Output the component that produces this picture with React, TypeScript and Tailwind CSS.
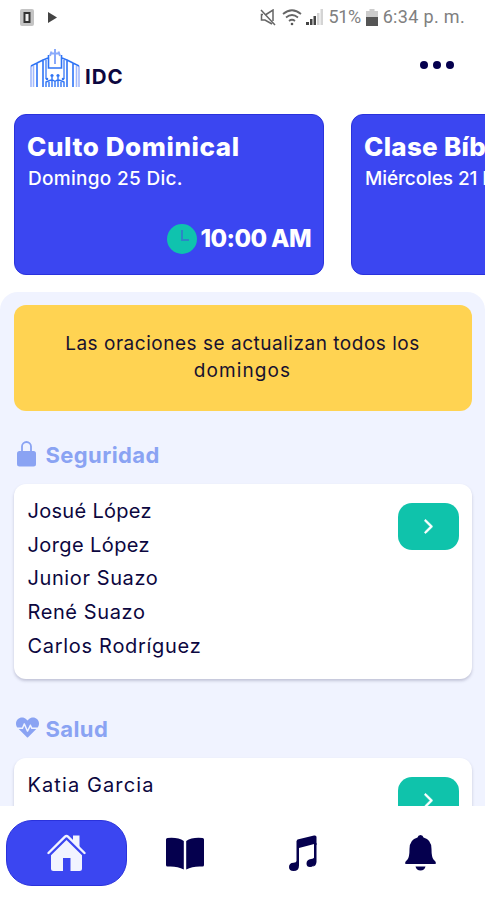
import { IoIosArrowForward } from "react-icons/io";
import { FaHeartbeat } from "react-icons/fa";
import type { ReactNode } from "react";

function StatusBar() {
  return (
    <div className="flex h-[34px] items-center justify-between pl-5 pr-5 font-['Roboto',sans-serif] text-lg text-[#808080]">
      <div className="flex items-center gap-[14px]">
        <svg width="14" height="17" viewBox="0 0 14 17">
          <rect width="14" height="17" rx="2" fill="#c4c4c4" />
          <rect x="4.5" y="4" width="5" height="9" fill="#eee" stroke="#333" strokeWidth="2" />
        </svg>
        <svg width="9" height="11" viewBox="0 0 9 11">
          <path d="M0 0 9 5.5 0 11Z" fill="#444" />
        </svg>
      </div>
      <div className="flex items-center">
        <svg width="16" height="17" viewBox="0 0 16 17" fill="none" stroke="#666" strokeWidth="1.5">
          <path d="M1 1 15 16M6 5.500 13 1V12M3 5.500H1.500V11H5L12 15" />
        </svg>
        <svg className="ml-[6px]" width="20" height="17" viewBox="0 0 20 17" fill="none" stroke="#666" strokeWidth="1.700">
          <path d="M1 5Q10-2.500 19 5M4 8.500Q10 3.500 16 8.500M7 12Q10 9.500 13 12" />
          <circle cx="10" cy="15" r="1.300" fill="#555" stroke="none" />
        </svg>
        <svg className="ml-1" width="17" height="16" viewBox="0 0 17 16">
          <path d="M0 13h3v3H0ZM4 10h2.500v6H4ZM7.500 7H10v9H7.500Z" fill="#444" />
          <path d="M11 4h2.500v12H11ZM14.500 0H17v16h-2.500Z" fill="#d4d4d4" />
        </svg>
        <span className="ml-[5px] tracking-[-0.4px]">51%</span>
        <svg className="ml-[5px]" width="12" height="17" viewBox="0 0 12 17">
          <path d="M3.500 0h5v2H12v6H0V2h3.500Z" fill="#ccc" />
          <path d="M0 8h12v9H0Z" fill="#555" />
        </svg>
        <span className="ml-[5px] tracking-[0.33px]">6:34 p. m.</span>
      </div>
    </div>
  );
}

function Logo() {
  return (
    <svg width="50" height="40" viewBox="0 0 50 40" fill="none" strokeWidth="1.600">
      <path d="M1 38V17M49 38V17M3.500 38V17M46.500 38V17" stroke="#a3b9fc" />
      <path d="M1 17 7 14V38M13 38V11L18 9M13 11 7 14M49 17 43 14V38M37 38V11L32 9M37 11 43 14" stroke="#2f74f5" />
      <path d="M16 30V11M34 30V11" stroke="#5f92f8" />
      <path d="M18.500 6V19H31.500V6" stroke="#2f74f5" />
      <path d="M25 0V15M20.500 4.500H29.500M21.500 2.500 20 7M28.500 2.500 30 7" stroke="#8aaafa" strokeWidth="2" />
      <path d="M16 38V33L22 30.500 25 32.500 28 30.500 34 33V38M19 38V33M31 38V33M22 28V38M28 28V38M25 33V38" stroke="#2f74f5" strokeWidth="1.400" />
      <g fill="#2f74f5">
        <circle cx="22" cy="26.500" r="1.600" />
        <circle cx="28" cy="26.500" r="1.600" />
        <circle cx="17" cy="30" r="1.300" />
        <circle cx="33" cy="30" r="1.300" />
      </g>
    </svg>
  );
}

function Header() {
  return (
    <header className="flex h-20 items-start justify-between pl-[30px] pr-[31px]">
      <div className="flex pt-[15px]">
        <Logo />
        <span className="ml-[5px] mt-[14px] text-[20.5px] leading-7 font-bold tracking-[1px]">IDC</span>
      </div>
      <div className="flex gap-[5px] pt-[27px]">
        <i className="size-2 rounded-full bg-[#05004e]" />
        <i className="size-2 rounded-full bg-[#05004e]" />
        <i className="size-2 rounded-full bg-[#05004e]" />
      </div>
    </header>
  );
}

function EventCard({ title, date, time }: { title: ReactNode; date: ReactNode; time?: string }) {
  return (
    <article className="flex h-[161px] w-[310px] shrink-0 flex-col rounded-xl border border-[#2a32dc] bg-[#3b46f1] px-3 pt-4 whitespace-nowrap text-white">
      <h2 className="text-[26px] leading-8 font-extrabold">{title}</h2>
      <p className="pl-px text-[19px] leading-8 font-medium">{date}</p>
      {time && (
        <div className="mt-[28px] flex items-center justify-end gap-1">
          <svg width="30" height="30" viewBox="0 0 30 30">
            <circle cx="15" cy="15" r="15" fill="#0fc3ae" />
            <path d="M15 6V16H22" fill="none" stroke="#2b86c5" strokeWidth="2" />
          </svg>
          <span className="text-[24px] leading-8 font-extrabold tracking-[-0.6px]">{time}</span>
        </div>
      )}
    </article>
  );
}

function GoButton() {
  return (
    <button className="flex h-[47px] w-[61px] items-center justify-center rounded-[14px] bg-[#0fc3ab] text-white">
      <IoIosArrowForward size={21} strokeWidth={14} stroke="currentColor" />
    </button>
  );
}

function LockIcon() {
  return (
    <svg width="19" height="27" viewBox="0 0 19 27">
      <path d="M5 12V6.500a4.500 4.500 0 0 1 9 0V12" fill="none" stroke="currentColor" strokeWidth="1.800" />
      <rect y="11" width="19" height="15.500" rx="2.500" fill="currentColor" />
    </svg>
  );
}

function Section({ icon, title, className, children }: { icon: ReactNode; title: string; className: string; children: ReactNode }) {
  return (
    <section className={className}>
      <h3 className="flex h-8 items-center text-[22px] font-bold tracking-[0.4px] text-[#8aa3f3]">
        <span className="flex w-8 items-center">{icon}</span>
        {title}
      </h3>
      <div className="mt-[13px] flex h-[195px] justify-between rounded-xl bg-white pt-[11px] pr-[13px] pl-[14px] shadow-[0_2px_3px_rgba(60,60,100,0.25)]">
        <ul className="text-[20px] leading-[33.7px]">{children}</ul>
        <div className="pt-2">
          <GoButton />
        </div>
      </div>
    </section>
  );
}

function HomeIcon() {
  return (
    <svg width="39" height="38" viewBox="0 0 39 38" fill="currentColor">
      <path d="M26 7V1.500H32.500V13.500Z" />
      <path d="M1.500 19 18 2.700Q19.500 1.400 21 2.700L37.500 19" fill="none" stroke="currentColor" strokeWidth="2.400" strokeLinecap="round" />
      <path d="M19.500 6 35 21.300V34.500Q35 37 32.500 37H23.500V24H16V37H6.500Q4 37 4 34.500V21.300Z" />
    </svg>
  );
}

function BookIcon() {
  return (
    <svg width="38" height="33" viewBox="0 0 38 33" fill="currentColor">
      <path d="M1.500 1Q12 0 17.800 4V32.500Q11 28.800 1.500 29.500 0 29.500 0 28V2.500Q0 1 1.500 1Z" />
      <path d="M36.500 1Q26 0 20.200 4V32.500Q27 28.800 36.500 29.500 38 29.500 38 28V2.500Q38 1 36.500 1Z" />
    </svg>
  );
}

function MusicIcon() {
  return (
    <svg width="28" height="36" viewBox="0 0 28 36" fill="currentColor">
      <path d="M8.500 4.500 25 .5Q27.500 0 27.500 2V10L25.500 10.500V26.500Q25.500 32 21 32 17.500 32 17.500 28.500 17.500 24.500 22 24 25.200 23.700 25.200 22V9L10 13V30.500Q10 36 4.500 36 0 36 0 32 0 28 4.500 27.800 7.500 27.500 7.500 26V6Z" />
      <path d="M25 8H27.500V27Q27 31 24 31.500L25 27Z" />
    </svg>
  );
}

function BellIcon() {
  return (
    <svg width="31" height="36" viewBox="0 0 31 36" fill="currentColor">
      <path d="M15.500 0Q18 0 18.500 2.500 26.500 4.500 26.500 14 26.500 22 28.500 24.500 31 26.500 31 28.200 31 29 29.500 29H1.500Q0 29 0 28.200 0 26.500 2.500 24.500 4.500 22 4.500 14 4.500 4.500 12.500 2.500 13 0 15.500 0Z" />
      <path d="M10.500 31.500H20.500Q19.500 35.500 15.500 35.500T10.500 31.500Z" />
    </svg>
  );
}

function TabBar() {
  return (
    <nav className="flex h-[94px] shrink-0 items-start bg-white pl-[6px] pt-[14px] text-[#05004e]">
      <div className="flex h-[66px] w-[121px] items-center justify-center rounded-[26px] border border-[#2a32dc] bg-[#3b46f1] text-[#f2f4ff]">
        <HomeIcon />
      </div>
      <div className="flex h-[66px] w-[115px] items-center justify-center">
        <BookIcon />
      </div>
      <div className="flex h-[66px] w-[121px] items-center justify-center">
        <MusicIcon />
      </div>
      <div className="flex h-[66px] w-[114px] items-center justify-center">
        <BellIcon />
      </div>
    </nav>
  );
}

export default function App() {
  return (
    <div className="flex h-[900px] w-[485px] flex-col overflow-hidden bg-white font-['Inter',sans-serif] text-[#0c0740]">
      <StatusBar />
      <Header />
      <div className="flex shrink-0 gap-[27px] overflow-hidden pl-[14px]">
        <EventCard
          title={<span className="tracking-[0.6px]">Culto Dominical</span>}
          date={<span className="tracking-[0.3px]">Domingo 25 Dic.</span>}
          time="10:00 AM"
        />
        <EventCard
          title={<span className="tracking-[0.3px]">Clase Bíblica</span>}
          date={<span className="tracking-[-0.1px]">Miércoles 21 Dic.</span>}
        />
      </div>
      <main className="mt-[17px] min-h-0 flex-1 overflow-hidden rounded-t-[18px] bg-[#f0f3ff] px-[13.500px] pt-[13px]">
        <div className="h-[106px] rounded-xl bg-[#ffd352] pt-[26px] text-center text-[19px] leading-[26.500px] text-[#17112f]">
          <p className="tracking-[0.52px]">Las oraciones se actualizan todos los</p>
          <p className="tracking-[1.1px]">domingos</p>
        </div>
        <Section className="mt-[28px]" title="Seguridad" icon={<span className="-mt-1 ml-[3px]"><LockIcon /></span>}>
          <li className="tracking-[0.3px]">Josué López</li>
          <li className="tracking-[0.4px]">Jorge López</li>
          <li className="tracking-[0.6px]">Junior Suazo</li>
          <li className="tracking-[0.6px]">René Suazo</li>
          <li className="tracking-[0.7px]">Carlos Rodríguez</li>
        </Section>
        <Section className="mt-[34px]" title="Salud" icon={<FaHeartbeat size={23} className="-mt-1 ml-0.5" />}>
          <li className="tracking-[1.1px]">Katia Garcia</li>
        </Section>
      </main>
      <TabBar />
    </div>
  );
}
